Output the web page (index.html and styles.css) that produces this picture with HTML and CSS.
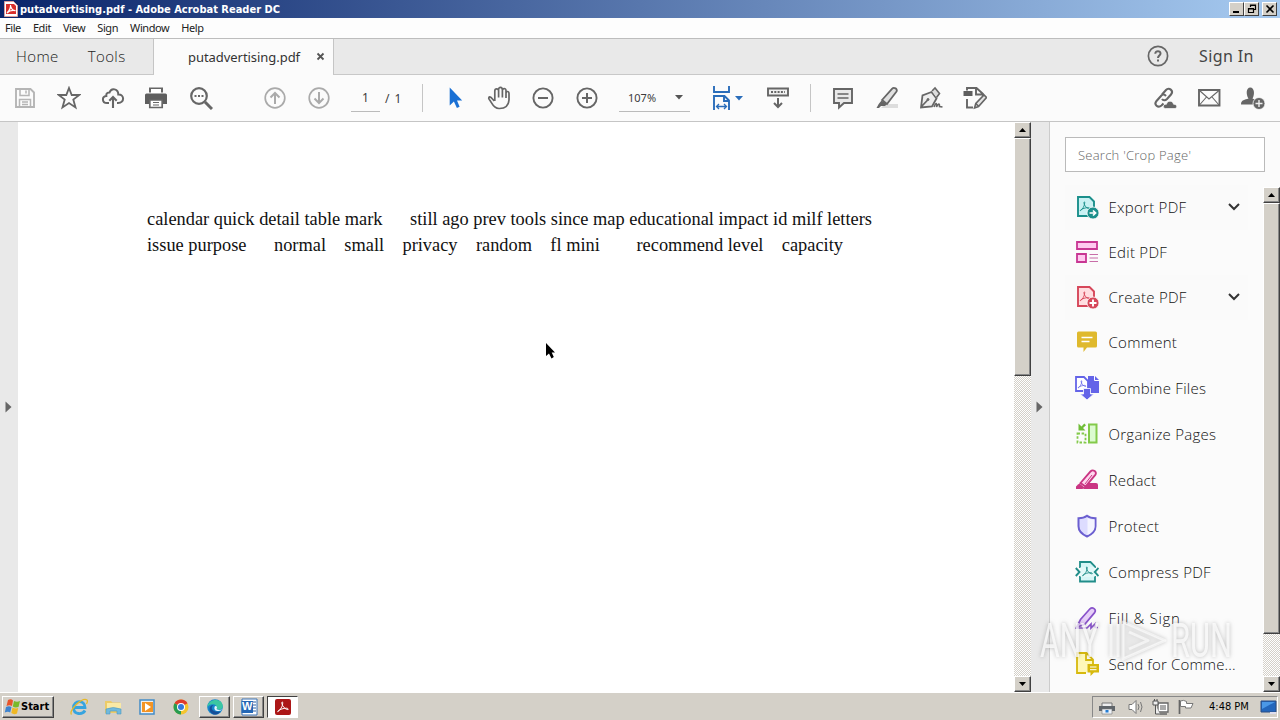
FILE: index.html
```html
<!DOCTYPE html>
<html lang="en">
<head>
<meta charset="utf-8">
<title>putadvertising.pdf - Adobe Acrobat Reader DC</title>
<link rel="stylesheet" href="styles.css">
</head>
<body>
<svg width="0" height="0" class="defs">
  <defs>
    <symbol id="acro" viewBox="0 0 12 12"><path d="M1 10.5C3 9.5 6 5 5.7 1.5C5.6.6 4.7.8 4.8 2C5 5 8 8.3 10.8 8.6C12 8.5 11 7.2 9.5 7.2C6.5 7.2 3 8.4 1.3 9.7C.4 10.5.5 11 1 10.5Z" fill="none" stroke="currentColor"/></symbol>
  </defs>
</svg>
<div class="screen">
  <header class="titlebar">
    <svg class="app-icon" viewBox="0 0 14 16" width="14" height="16"><path d="M.5.5h9l4 4v11H.5z" fill="#fff" stroke="#d8a0a0"/><path d="M2 3h8l2 2v8H2z" fill="#d92e2a"/><path d="M3 12C5 10 7 7 6.400 4C7 8 9 9.500 11.500 9.700C8 9 5 10 3 12" fill="none" stroke="#fff" stroke-width="1.200"/></svg>
    <span class="title">putadvertising.pdf - Adobe Acrobat Reader DC</span>
    <div class="winbtns">
      <span class="wb"><svg width="12" height="10"><path d="M2 8h6" stroke="#000" stroke-width="2"/></svg></span>
      <span class="wb"><svg width="12" height="10"><path d="M4.500 3V1h5v4.500H8M4 1.500h6M2.500 4.500h5v4h-5zM2 5h6" fill="none" stroke="#000" stroke-width="1.200"/></svg></span>
      <span class="wb close"><svg width="12" height="10"><path d="M2.500 1.500l7 7M9.500 1.500l-7 7" stroke="#000" stroke-width="1.600"/></svg></span>
    </div>
  </header>
  <nav class="menubar"><span>File</span><span>Edit</span><span>View</span><span>Sign</span><span>Window</span><span>Help</span></nav>
  <div class="tabs">
    <div class="tab-left"><span class="home">Home</span><span class="tools">Tools</span></div>
    <div class="tab-active"><span class="doc">putadvertising.pdf</span><svg width="9" height="9"><path d="M1.500 1.500l6 6M7.500 1.500l-6 6" stroke="#555" stroke-width="1.800"/></svg></div>
    <div class="tab-right">
      <svg width="24" height="24" viewBox="0 0 24 24"><circle cx="12" cy="12" r="9.600" fill="none" stroke="#666" stroke-width="1.700"/><path d="M9.300 9.700C9.300 6.300 14.700 6.500 14.500 9.600C14.300 11.500 12 11.500 12 14M12 15.400v2" fill="none" stroke="#666" stroke-width="2"/></svg>
      <span class="signin">Sign In</span>
    </div>
  </div>
  <div class="toolbar">
    <div class="cells g1">
      <svg viewBox="0 0 24 24" stroke="#b5b5b5"><path d="M3 3h14.500L21 6.500V21H3z" stroke-width="1.900"/><path d="M7 3.500v6h9v-6M13 4.500v3M6.500 21v-7.500h11V21M9 16h6M9 18.500h6" stroke-width="1.500"/></svg>
      <svg viewBox="0 0 24 24"><path d="M12 2l2.700 7H22.300l-6 4.600 2.200 7.800L12 17l-6.500 4.400 2.200-7.800-6-4.600h7.600z" stroke-width="1.800"/></svg>
      <svg viewBox="0 0 24 24"><path d="M8 17H6C.7 17 .7 10.500 5.300 10C4.800 6 8.300 6.500 8.500 6.500C10.500 1 17.300 3 17.300 8.500C23.500 8 24 17 17 17H16" stroke-width="2"/><path d="M12 22V12M8.300 14.800L12 11l3.700 3.800" stroke-width="2.100"/></svg>
      <svg viewBox="0 0 24 24"><g transform="translate(-1 0)"><path d="M5 1.500h14v5H5z" fill="#666" stroke="none"/><path d="M7 3h10v4H7z" fill="#fff" stroke="none"/><path d="M2.500 7.500h19Q23 7.500 23 9v9h-4v-3H5v3H1V9q0-1.500 1.500-1.500z" fill="#5e5e5e" stroke="none"/><path d="M5.800 14h12.400v7.500H5.800z" fill="#fff" stroke-width="1.700"/><path d="M9 16.500h6M9 19h6" stroke-width="1.200"/></g></svg>
      <svg viewBox="0 0 24 24"><circle cx="10" cy="10" r="7.800" stroke-width="2.200"/><path d="M16 16l7 7" stroke-width="3"/><path d="M5.500 10h2M9 10h2M12.500 10h2" stroke-width="1.900"/></svg>
    </div>
    <div class="cells g2">
      <svg viewBox="0 0 24 24" stroke="#aaa"><circle cx="12" cy="12" r="9.800" stroke-width="1.700"/><path d="M12 18V7M7.500 11.500L12 7l4.500 4.500" stroke-width="2"/></svg>
      <svg viewBox="0 0 24 24" stroke="#aaa"><circle cx="12" cy="12" r="9.800" stroke-width="1.700"/><path d="M12 6v11M7.500 12.500L12 17l4.500-4.500" stroke-width="2"/></svg>
    </div>
    <div class="page-num">1</div><div class="page-total">/ 1</div>
    <div class="sep s1"></div>
    <div class="cells g3">
      <svg viewBox="0 0 24 24" stroke="none"><path d="M6.700 1.500v18l4.200-4 3 6.500 2.700-1.300-2.600-6.200h5.200z" fill="#1a70d4"/></svg>
      <svg viewBox="0 0 24 24"><path d="M7.300 15L4 11.500C1.800 9.800 1.200 12 2.300 13.500C5 16.500 6 22.500 12 22.500C18.500 22.700 21.500 20 22 14V7.500C22 4.700 19 5 19 7.500V12M19 8V4.500C19 1.800 15.400 2 15.400 4.500V11.500M15.400 4C15.400.5 11.600.8 11.600 3.500V11.500M11.600 5C11.600 2 7.800 2.200 7.800 5V15" stroke-width="1.700"/></svg>
      <svg viewBox="0 0 24 24"><circle cx="12" cy="12" r="9.600" stroke-width="1.900"/><path d="M7 12h10" stroke-width="2"/></svg>
      <svg viewBox="0 0 24 24"><circle cx="12" cy="12" r="9.600" stroke-width="1.900"/><path d="M7 12h10M12 7v10" stroke-width="2"/></svg>
    </div>
    <div class="zoom"><span>107%</span><svg width="8" height="5"><path d="M0 0h8L4 4.500z" fill="#555" stroke="none"/></svg></div>
    <svg class="fit" width="34" height="26" viewBox="0 0 34 26" fill="none" stroke="#2a6dba"><path d="M2 1v6h15V1M2 25V11h10.500l4.500 4.500V25M12 11.500v4.500h5" stroke-width="1.900"/><path d="M5 21.500h9M7 19l-2.500 2.500L7 24M12 19l2.500 2.500L12 24" stroke-width="1.300"/><path d="M23 11h8l-4 4.500z" fill="#2a6dba" stroke="none"/></svg>
    <svg class="kbd" width="24" height="24" viewBox="0 0 24 24"><path d="M2 2.500h20v7H2z" fill="#f0f0f0" stroke-width="1.900"/><path d="M5 6h14" stroke-width="2" stroke-dasharray="2 1.300"/><path d="M12 12v9M8 17l4 4 4-4" stroke-width="2"/></svg>
    <div class="sep s2"></div>
    <div class="cells g4">
      <svg viewBox="0 0 24 24"><path d="M3 3h18v14h-8l-5 4.500V17H3z" fill="#e9e9e9" stroke-width="1.900"/><path d="M6.500 8h11M6.500 12h11" stroke-width="1.400"/></svg>
      <svg viewBox="0 0 24 24"><path d="M10 18h13v4H6z" fill="#ddd" stroke="none"/><path d="M7 14L17 2.800C19 .6 23 3 21.500 5.500L12 18z" fill="#e0e0e0" stroke-width="1.800"/><path d="M6.500 14.500L12 18l-2 2H6l-2 2H1.500l2.200-4z" fill="#666" stroke="none"/></svg>
      <svg viewBox="0 0 24 24"><path d="M2 21.500L3.500 9.500L12.500 6l5 6.500L13 20.500zM2 21l6.700-7" fill="#eee" stroke-width="1.800"/><circle cx="9" cy="13.500" r="1" fill="#666"/><path d="M13 5l3-3 4.500 5.500-3 4" fill="#ddd" stroke-width="1.600"/><path d="M15 21c2-5 3-4 2.500 0c2-4 3-4 3-.5l3 .5" stroke-width="1.600"/></svg>
      <svg viewBox="0 0 24 24"><path d="M4 4.500V2h9.500L20 8v3M13 2v6.500h7M4 13v8.500h6" stroke-width="1.900"/><path d="M.5 5h9v5h-9z" fill="#5e5e5e" stroke="none"/><path d="M11.500 22l1.300-4.500L21 9l2.500 2.500-8 9zM12.800 17.500l3 3" fill="#e4e4e4" stroke-width="1.600"/></svg>
    </div>
    <div class="cells g5">
      <svg viewBox="0 0 24 24"><path d="M9 8.500l4-4.500c3-3.500 8 1 5 4.500L14 13c-2 2-4 1.500-5 0M13 10c-2-2.500-4-1.500-5.500.5L3.500 15C.5 18.500 5 22.500 8.500 19.500l2-2" stroke-width="2.100"/><path d="M12.500 22.500c-3.500-.3-2.500-5 1-4.300c.5-4 6.500-4 7 0c4-.2 4 4 1.500 4.300z" fill="#666" stroke="#fbfbfb" stroke-width=".7"/></svg>
      <svg viewBox="0 0 24 24"><path d="M2 4h20.500v15.500H2z" stroke-width="1.900"/><path d="M2.500 4.500L12 13l10-8.500M2.500 19l7-8M22 19l-7-8" stroke-width="1.100"/></svg>
      <svg viewBox="0 0 24 24"><path d="M0 18.500C0 13.500 4 14 7.500 12.500C4.800 8.500 5 1.500 9.300 1.500C13.500 1.500 14 8.500 11.500 12.500l4 2v4z" fill="#666" stroke="none"/><circle cx="18" cy="17.500" r="6" fill="#666" stroke="#fbfbfb" stroke-width=".8"/><path d="M18 14v7M14.500 17.500h7" stroke="#eee" stroke-width="1.400"/></svg>
    </div>
  </div>
  <main class="work">
    <div class="rail left"><svg width="7" height="12"><path d="M.5.500L6.500 6L.5 11.500z" fill="#666"/></svg></div>
    <section class="page">
<p>calendar quick detail table mark      still ago prev tools since map educational impact id milf letters</p>
<p>issue purpose      normal    small    privacy    random    fl mini        recommend level    capacity</p>
      <svg class="cursor" width="11" height="18"><path d="M1 1v13l3-2.500 2.500 5L8.800 15 6.700 10.500H10z" fill="#000"/></svg>
    </section>
    <div class="scroll doc-scroll"><span class="sb"><svg width="7" height="4"><path d="M0 4h7L3.500 0z"/></svg></span><span class="thumb"></span><span class="sb"><svg width="7" height="4"><path d="M0 0h7L3.500 4z"/></svg></span></div>
    <div class="rail mid"><svg width="7" height="12"><path d="M.5.500L6.500 6L.5 11.500z" fill="#666"/></svg></div>
    <aside class="panel">
      <div class="search">Search 'Crop Page'</div>
      <div class="panel-body">
        <ul class="list">
          <li class="hl"><svg viewBox="0 0 24 24"><path d="M3 2h11.500L19 6.500V21H3z" fill="#c9f1f3" stroke="#1b8f8b" stroke-width="1.900"/><use href="#acro" x="4.500" y="6" width="11" height="11" color="#1b8f8b"/><circle cx="18" cy="18" r="6" fill="#1b8f8b" stroke="#fafafa" stroke-width=".8"/><path d="M14.500 18h6M18 15.500l2.600 2.500-2.600 2.500" stroke="#fff" stroke-width="1.700"/></svg><span>Export PDF</span><svg class="chev" viewBox="0 0 12 8"><path d="M1 1l5 5 5-5" stroke="#333" stroke-width="2"/></svg></li>
          <li><svg viewBox="0 0 24 24"><path d="M2 2h20v7H2zM2 14h9v8H2z" fill="#ffc9ef" stroke="#c83693" stroke-width="1.800"/><path d="M14.500 14.500H23M14.500 18H23M14.500 21.500H23" stroke="#c86da8"/></svg><span>Edit PDF</span></li>
          <li class="hl"><svg viewBox="0 0 24 24"><path d="M3 2h11.500L19 6.500V21H3z" fill="#ffdde0" stroke="#d6475a" stroke-width="1.900"/><use href="#acro" x="4.500" y="6" width="11" height="11" color="#d6475a"/><circle cx="18" cy="18" r="6" fill="#d6475a" stroke="#fafafa" stroke-width=".8"/><path d="M18 14.500v7M14.500 18h7" stroke="#fff" stroke-width="1.900"/></svg><span>Create PDF</span><svg class="chev" viewBox="0 0 12 8"><path d="M1 1l5 5 5-5" stroke="#333" stroke-width="2"/></svg></li>
          <li><svg viewBox="0 0 24 24"><path d="M3.500 1.500h17q1.500 0 1.500 1.500v13q0 1.500-1.500 1.500h-8.500l-3.500 4.500v-4.500h-5q-1.500 0-1.500-1.500V3q0-1.500 1.500-1.500z" fill="#dfb92d"/><path d="M6.500 7.500h11M6.500 11.500h8" stroke="#fff" stroke-width="1.700"/></svg><span>Comment</span></li>
          <li class="tall"><svg viewBox="0 0 24 24"><path d="M13 0h7l4 4v13H13z" fill="#6464e8"/><path d="M19.500 0v4.500H24" stroke="#fff"/><path d="M1 1h8l4 4v10H1z" fill="#fff" stroke="#6464e8" stroke-width="1.800"/><use href="#acro" x="2.500" y="4" width="9" height="9" color="#6464e8"/><path d="M8.500 12.500h7V18h3.300L12 24l-6.800-6h3.300z" fill="#6464e8" stroke="#fff" stroke-width=".8"/></svg><span>Combine Files</span></li>
          <li class="tall"><svg viewBox="0 0 24 24"><path d="M14 2.500h7.500v18H14z" fill="#dcfbd0" stroke="#83ca4a" stroke-width="2"/><path d="M2.500 11.500h8v9h-8z" stroke="#83ca4a" stroke-width="1.800" stroke-dasharray="2.500 1.600"/><path d="M3.500 1.500v7h7L8 6l3-2.800-1.700-1.700-2.800 3z" fill="#70bd38"/></svg><span>Organize Pages</span></li>
          <li class="tall"><svg viewBox="0 0 24 24"><path d="M12 15h9q2 0 2 2v4H8z" fill="#ca3583"/><path d="M5.500 15L15.500 3.500C18 .8 22.500 4 20.300 6.800L10.500 18.500z" fill="#ffd6ee" stroke="#ca3583" stroke-width="1.900"/><path d="M4.500 15.500l5 4-2 1.500H1v-2.500l2-2z" fill="#ca3583"/><path d="M10 16l7-9" stroke="#ca3583"/></svg><span>Redact</span></li>
          <li class="tall"><svg viewBox="0 0 24 24"><path d="M12 1.800c2.500 2 5 2.500 8.500 2.500v8c0 5-3.500 8-8.500 10.200C7 20.300 3.500 17.300 3.500 12.300v-8C7 4.300 9.500 3.800 12 1.800z" fill="#dddcff" stroke="#6b5fd0" stroke-width="2"/><path d="M12.500 4c2 1.200 4 1.500 7 1.500v7c0 4-3 6.500-7 8.500z" fill="#f4f4ff"/></svg><span>Protect</span></li>
          <li class="tall"><svg viewBox="0 0 24 24"><path d="M5 8V2h10.500L20 6.500V8M5 16v5.500h15V16" fill="#d6f5f6" stroke="#218d89" stroke-width="1.800"/><path d="M5.500 7h14v10h-14z" fill="#e2f8f8"/><use href="#acro" x="7" y="6" width="11" height="11" color="#218d89"/><path d="M.8 8l3.700 4-3.700 4M23.500 8l-3.700 4 3.700 4" stroke="#218d89" stroke-width="1.900"/></svg><span>Compress PDF</span></li>
          <li class="tall sign"><svg viewBox="0 0 24 24"><path d="M1.500 21.500l4-8L15 2.800c2.500-2.500 6.800.8 4.600 3.800L10 18z" fill="#e6cff8" stroke="#8852ca" stroke-width="1.700"/><path d="M1 22h11l4-4v4l4-4v3.500h3" stroke="#8852ca" stroke-width="1.700"/></svg><span>Fill &amp; Sign</span></li>
          <li class="tall last"><svg viewBox="0 0 24 24"><path d="M11 21H2V1h9.500L18 7.500V12M11 1.500V8h7" fill="#fff8b8" stroke="#d7b90d" stroke-width="1.800"/><path d="M12.500 12H24v8.500h-5L15.500 24v-3.500h-3z" fill="#d7b90d"/><path d="M15 15h6.500M15 17.700h6.500" stroke="#fff"/></svg><span>Send for Comme...</span></li>
        </ul>
        <div class="scroll panel-scroll"><span class="sb"><svg width="7" height="4"><path d="M0 4h7L3.500 0z"/></svg></span><span class="thumb"></span><span class="sb"><svg width="7" height="4"><path d="M0 0h7L3.500 4z"/></svg></span></div>
      </div>
    </aside>
  </main>
  <footer class="taskbar">
    <div class="start"><svg width="17" height="18" viewBox="0 0 17 18"><path d="M4 2q3-1.500 5 .5L8 8Q5.500 6.500 2.500 8z" fill="#e8552b"/><path d="M10 3q3 1.500 6 0l-1.500 6Q11 10 8.800 8.500z" fill="#79b92b"/><path d="M2 9q3-1.500 5.500 0L6.200 14.500Q4 13 .8 14.500z" fill="#3d83cf"/><path d="M8.500 9.500q3 1.500 5.700.5L13 15.500q-3 1.500-5.700-.5z" fill="#efb824"/></svg><b>Start</b></div>
    <div class="quick">
      <svg viewBox="0 0 20 20"><path d="M16 13.500C13.500 18 4.500 18 4.500 10.500C4.500 3 16 2.500 16 10.500H6" fill="none" stroke="#36a4df" stroke-width="2.800"/><path d="M2.500 17.500C-1 14 13 0 18 3c1 1 0 3-.5 4" fill="none" stroke="#e7b928" stroke-width="1.300"/></svg>
      <svg viewBox="0 0 20 20"><path d="M2 4h6l1.500 1.500H17V16H2z" fill="#eccb68"/><path d="M4 6h14v8H4z" fill="#fae9a5"/><path d="M3 17v-5q7-3 15 0v5h-4v-3H7v3z" fill="#70b9dd" stroke="#4b99c1" stroke-width=".6"/></svg>
      <svg viewBox="0 0 20 20"><path d="M3 3h14v14H3z" fill="#f1efed" stroke="#438cc6" stroke-width="1.500"/><path d="M5 5h11v10H5z" fill="#f39424"/><path d="M8 6l6 4-6 4z" fill="#fff"/></svg>
      <svg viewBox="0 0 20 20"><circle cx="10" cy="10" r="7.500" fill="#f4c52f"/><path d="M10 10L3.500 6.300A7.500 7.500 0 0 1 16.500 6.300z" fill="#df3b2c"/><path d="M10 10L3.500 6.300A7.500 7.500 0 0 0 10 17.500z" fill="#279b51"/><circle cx="10" cy="10" r="4" fill="#fff"/><circle cx="10" cy="10" r="3" fill="#3479dc"/></svg>
    </div>
    <div class="apps">
      <span class="task"><svg viewBox="0 0 20 20"><circle cx="10" cy="10" r="7.800" fill="#1686cc"/><path d="M2.200 10C3 1 17.500.5 17.800 9c0 4-4.800 4.500-6.500 2.500C13 8 7 5 2.200 10z" fill="#3bc7a2"/><path d="M8.500 8c-4 3-1 8 7 6.500-2 3-5 3.300-7 3C3 15 3.500 8 8.500 8z" fill="#174f98"/><path d="M10 9q3 0 1.500 3 3 2 6 0-2 3-7 1.500-2-2-.5-4.500" fill="#e5f6ff"/></svg></span>
      <span class="task"><svg viewBox="0 0 20 20"><path d="M3 2h15v16H3z" fill="#fff" stroke="#3a73b6"/><path d="M14 5h3M14 8h3M14 11h3M14 14h3" stroke="#2861a5"/><path d="M2.500 4h11.500v12h-11.500z" fill="#2467b5"/></svg><b class="word">W</b></span>
      <span class="task on"><svg viewBox="0 0 20 20"><rect x="2" y="2" width="16" height="16" rx="2" fill="#ac1717"/><use href="#acro" x="4" y="4" width="12" height="12" color="#fff"/></svg></span>
    </div>
    <div class="tray">
      <svg class="t1" viewBox="0 0 18 18"><path d="M4 5h10v4H4z" fill="#eee" stroke="#777"/><path d="M1 8h16v5H1z" fill="#60656a"/><path d="M4 11h10v5H4z" fill="#eef2f8" stroke="#777" stroke-width=".6"/><path d="M7.500 12h3v2.500h-3z" fill="#237cd3"/></svg>
      <svg class="t2" viewBox="0 0 18 18"><path d="M2 6.500h3l4-4v13l-4-4H2z" fill="#fff" stroke="#777"/><path d="M11 6q2 3 0 6M13.500 4q3 5 0 10" fill="none" stroke="#777"/></svg>
      <svg class="t3" viewBox="0 0 18 18"><path d="M6 5h10v9H6zM8 16h7" fill="#fff" stroke="#666" stroke-width="1.300"/><path d="M8 7h6v5H8z" fill="#aaa"/><path d="M1 3h5v4H1zM2.500 1v2M5 1v2M3.500 7v9H8" fill="#eee" stroke="#555"/></svg>
      <svg class="t4" viewBox="0 0 18 18"><path d="M2.500 2v14" stroke="#666" stroke-width="1.700"/><path d="M3.500 3q3-1.500 6 .5v2h6.500l-2 4.500H8.500V8.500h-5z" fill="#fff" stroke="#777"/></svg>
      <span>4:48 PM</span>
      <svg class="t5" viewBox="0 0 18 18"><path d="M1 3h15v11H1z" fill="#2366bc" stroke="#2b4d84"/><path d="M2 4h13L2 11z" fill="#4b98e7"/><path d="M10 14h6v2h-6z" fill="#dde"/></svg>
    </div>
  </footer>
  <svg class="watermark" width="210" height="76" viewBox="-6 -12 210 76">
    <text x="2" y="37" textLength="59" lengthAdjust="spacingAndGlyphs">ANY</text>
    <path d="M73 4v33M80 4v33M85 2L127 20.500L85 39zM91 12l19 8.500-19 8.500"/>
    <text x="133" y="37" textLength="61" lengthAdjust="spacingAndGlyphs">RUN</text>
  </svg>
</div>
</body>
</html>
```
FILE: styles.css
```css
* { box-sizing: border-box; }
body { margin: 0; overflow: hidden; font-family: "Noto Sans", sans-serif; color: #3c3c3c; }
.defs { position: absolute; }
svg { flex: none; display: block; }
.screen { position: relative; width: 1280px; height: 720px; display: grid; grid-template-rows: 18px 20px 37px 47px 570px 28px; background: #fbfbfb; }
.titlebar { display: flex; align-items: center; padding: 0 3px 0 4px; background: linear-gradient(90deg, #0a246a, #a6caf0); }
.title { margin-left: 2px; color: #fff; font: bold 11px "DejaVu Sans Condensed", "DejaVu Sans", sans-serif; font-stretch: condensed; white-space: nowrap; }
.winbtns { display: flex; margin-left: auto; margin-top: -1px; }
.wb { width: 15px; height: 14px; background: #d4d0c8; border: 1px solid; border-color: #fff #404040 #404040 #fff; display: flex; align-items: center; justify-content: center; }
.close { margin-left: 3px; }
.menubar { display: flex; align-items: center; gap: 12px; padding: 0 0 2px 5px; font: 11px "Noto Sans", sans-serif; letter-spacing: -.42px; color: #222; background: #fdfdfd; }
.tabs { display: flex; border-top: 1px solid #bdbdbd; background: #e9e9e9; }
.tab-left { width: 154px; display: flex; align-items: center; padding: 0 0 2px 16px; border-right: 1px solid #c5c5c5; border-bottom: 1px solid #c8c8c8; font-size: 15px; color: #222; font-family: "Open Sans", sans-serif; font-weight: 300; letter-spacing: .4px; }
.tools { margin-left: 29px; }
.tab-active { width: 179px; background: #fbfbfb; display: flex; align-items: center; padding-left: 34px; font: 13px "Noto Sans", sans-serif; letter-spacing: -.05px; color: #333; }
.tab-active svg { margin: -2px 0 0 16px; }
.tab-right { flex: 1; display: flex; align-items: center; border-left: 1px solid #c5c5c5; border-bottom: 1px solid #c8c8c8; padding: 0 0 2px 812px; }
.signin { margin-left: 29px; font-size: 16px; letter-spacing: .4px; color: #444; }
.toolbar { display: flex; height: 47px; border-bottom: 1px solid #c5c5c5; align-items: center; background: #fbfbfb; fill: none; stroke: #666; }
.cells { display: flex; }
.cells svg { width: 24px; height: 24px; margin: 0 10px; }
.g1 { margin-left: 3px; }
.g2 { margin-left: 30px; }
.page-num { width: 29px; height: 27px; margin-left: 10px; padding-top: 3px; border-bottom: 1px solid #bbb; text-align: center; font-size: 12px; line-height: 20px; }
.page-total { margin-left: 5px; width: 31px; font-size: 12px; word-spacing: 2px; }
.sep { width: 1px; height: 28px; background: #c5c5c5; }
.s1 { margin-left: 6px; }
.g3 { margin-left: 10px; }
.zoom { width: 71px; height: 27px; margin-left: 10px; padding: 0 7px 0 9px; border-bottom: 1px solid #bbb; display: flex; justify-content: space-between; align-items: center; font-size: 11px; }
.fit { margin-left: 22px; }
.kbd { margin-left: 20px; }
.s2 { margin-left: 20px; }
.g4 { margin-left: 10px; }
.g5 { margin-left: auto; margin-right: 5px; }
.work { display: grid; grid-template-columns: 18px 996px 17px 19px 230px; min-height: 0; }
.rail { background: #e9e9e9; display: flex; align-items: center; padding-left: 5px; }
.mid { border-right: 1px solid #ccc; }
.page { position: relative; background: #fff; padding: 84px 0 0 129px; }
.page p { margin: 0; font: 18.38px/26px "Liberation Serif", serif; color: #111; white-space: pre; }
.cursor { position: absolute; left: 527px; top: 220px; }
.scroll { display: flex; flex-direction: column; background: repeating-conic-gradient(#d4d0c8 0 25%, #fff 0 50%) 0 0 / 2px 2px; }
.sb { height: 16px; background: #d4d0c8; border: 1px solid; border-color: #fff #404040 #404040 #fff; box-shadow: inset -1px -1px #888; display: flex; align-items: center; justify-content: center; }
.sb:last-child { margin-top: auto; }
.thumb { background: #d4d0c8; border: 1px solid; border-color: #fff #404040 #404040 #fff; box-shadow: inset -1px -1px #888; }
.doc-scroll .thumb { height: 238px; }
.panel { padding: 15px 0 0 15px; background: #fbfbfb; display: flex; flex-direction: column; min-height: 0; }
.search { width: 200px; height: 35px; flex: none; border: 1px solid #bababa; background: #fff; padding-left: 12px; font: 300 13px/34px "Open Sans", sans-serif; letter-spacing: .25px; color: #666; }
.panel-body { flex: 1; display: flex; margin-top: 13px; min-height: 0; }
.list { list-style: none; margin: 0 15px 0 0; padding: 0; width: 183px; }
.list li { display: flex; align-items: center; height: 45px; padding: 0 0 1px 10px; font: 300 15px "Open Sans", sans-serif; letter-spacing: .27px; color: #111; white-space: nowrap; fill: none; }
.list .tall { height: 46px; padding-bottom: 0; }
.list svg { width: 24px; height: 24px; }
.list span { margin-left: 9.5px; }
.list .sign { letter-spacing: .7px; }
.list .last { letter-spacing: .15px; }
.list .hl { background: #fafafa; }
.list .chev { width: 12px; height: 8px; margin-left: auto; margin-right: 8px; }
.panel-scroll { width: 17px; margin-top: 2px; }
.panel-scroll .thumb { height: 431px; }
.taskbar { display: flex; align-items: center; background: #d4d0c8; border-top: 1px solid #fff; padding-left: 2px; }
.start, .task { height: 22px; display: flex; align-items: center; border: 1px solid; border-color: #fff #404040 #404040 #fff; box-shadow: inset -1px -1px #888; }
.start { width: 52px; font: 11px "DejaVu Sans Condensed", "DejaVu Sans", sans-serif; color: #000; padding-left: 1px; }
.quick { display: flex; gap: 14px; margin-left: 15px; }
.quick svg { width: 20px; height: 20px; }
.apps { display: flex; gap: 3px; margin-left: 8px; }
.task { position: relative; width: 31px; justify-content: center; }
.task svg { width: 20px; height: 20px; }
.task.on { background: #fff; border-color: #404040 #fff #fff #404040; box-shadow: none; }
.word { position: absolute; left: 8px; top: 3px; font: bold 11px "Liberation Sans", sans-serif; color: #fff; }
.tray { width: 186px; height: 22px; margin-left: auto; margin-right: 2px; border: 1px solid; border-color: #888 #fff #fff #888; display: flex; align-items: center; padding-left: 5px; font: 11px "DejaVu Sans Condensed", "DejaVu Sans", sans-serif; color: #000; white-space: nowrap; }
.tray svg { width: 18px; height: 18px; }
.t2 { margin-left: 11px; }
.t3, .t4 { margin-left: 7px; }
.tray span { width: 40px; margin-left: 14px; }
.tray .t5 { margin-left: 11px; }
.watermark { position: absolute; left: 1032px; top: 608px; fill: rgba(255,255,255,.75); stroke: rgba(255,255,255,.6); filter: drop-shadow(0 0 2px rgba(100,100,100,.55)); }
.watermark text { font: 48px Roboto, sans-serif; stroke: none; }
.watermark path { fill: rgba(255,255,255,.4); stroke-width: 3; stroke-linejoin: round; }
```
